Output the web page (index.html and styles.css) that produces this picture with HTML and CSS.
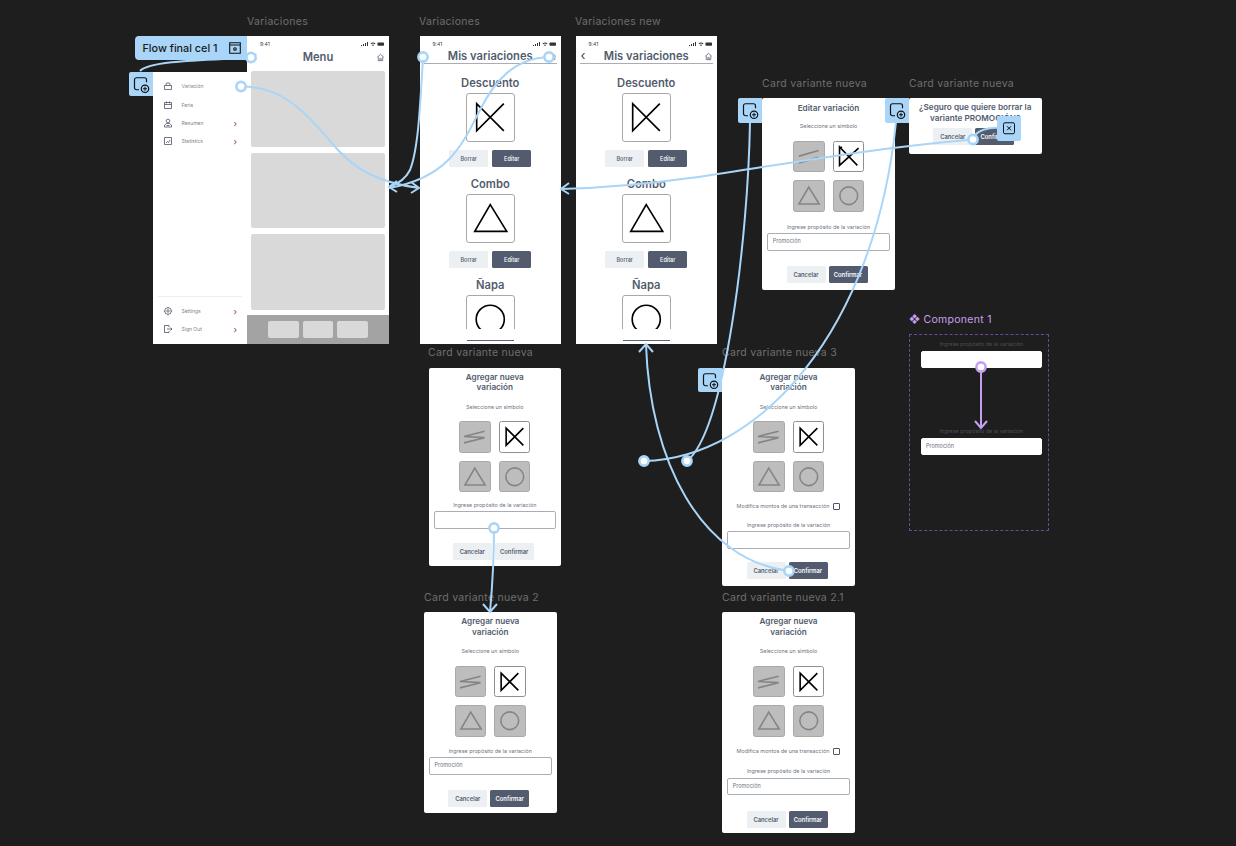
FILE: index.html
```html
<!DOCTYPE html>
<html lang="es">

    <head>
        <meta charset="UTF-8">
        <title>Variaciones</title>
        <link rel="stylesheet" href="styles.css">
    </head>

    <body>
        <svg class="defs" width="0" height="0">
            <symbol id="sym-k" viewBox="0 0 48 48"><path d="M38 10 10 38V10L38 38"/></symbol>
            <symbol id="sym-k2" viewBox="0 0 48 48"><path d="M40 10 9 38V8L38 38M9 10l4-2"/></symbol>
            <symbol id="sym-t" viewBox="0 0 48 48"><path d="M24 10 41 37.5H8Z"/></symbol>
            <symbol id="sym-c" viewBox="0 0 48 48"><circle cx="24" cy="24" r="14.5"/></symbol>
            <symbol id="sym-z" viewBox="0 0 48 48"><path d="M40 15 6.5 23.5 40 25.5 6.5 34"/></symbol>
            <symbol id="sym-p" viewBox="0 0 48 48"><path d="M40 14 8 23M40 25 8 34"/></symbol>
            <symbol id="ic-home" viewBox="0 0 10 10"><path d="M1.5 4.6 5 1.5l3.5 3.1M2.5 4v4.5h5V4M4.2 8.5V6.2h1.6v2.3" fill="none" stroke="currentColor" stroke-width=".8"/></symbol>
            <symbol id="ic-status" viewBox="0 0 24 6">
                <path d="M1 5h1V4H1zM3 5h1V3H3zM5 5h1V2H5zM7 5h1V1H7z" fill="currentColor"/>
                <path d="M10.5 2.4a4 4 0 0 1 5 0l-.7.8a3 3 0 0 0-3.6 0zM13 5.2l-1-1.2a1.6 1.6 0 0 1 2 0z" fill="currentColor"/>
                <rect x="17.5" y="1.5" width="6.5" height="3.2" rx=".7" fill="currentColor"/>
            </symbol>
            <symbol id="ic-add" viewBox="0 0 24 24">
                <path d="M10 17.5H7.5a2 2 0 0 1-2-2v-8a2 2 0 0 1 2-2h8a2 2 0 0 1 2 2V10" fill="none" stroke="currentColor" stroke-width="1.2"/>
                <circle cx="16" cy="16.5" r="3.7" fill="none" stroke="currentColor" stroke-width="1.2"/>
                <path d="M14 16.5h4M16 14.5v4" stroke="currentColor" stroke-width="1"/>
            </symbol>
        </svg>

        <div class="canvas">
            <span class="frame-name name-menu">Variaciones</span>
            <span class="frame-name name-mis">Variaciones</span>
            <span class="frame-name name-new">Variaciones new</span>
            <span class="frame-name name-edit">Card variante nueva</span>
            <span class="frame-name name-del">Card variante nueva</span>
            <span class="frame-name name-card1">Card variante nueva</span>
            <span class="frame-name name-card3">Card variante nueva 3</span>
            <span class="frame-name name-card2">Card variante nueva 2</span>
            <span class="frame-name name-card21">Card variante nueva 2.1</span>
            <span class="frame-name name-comp">❖ Component 1</span>

            <!-- menu -->
            <section class="frame phone phone-menu">
                <div class="status"><span>9:41</span><svg class="status-icons"><use href="#ic-status"/></svg></div>
                <div class="phone-head menu-head">
                    <span class="back-left">‹</span>
                    <h1>Menu</h1>
                    <svg class="home"><use href="#ic-home"/></svg>
                </div>
                <div class="menu-cards">
                    <div class="menu-card"></div>
                    <div class="menu-card"></div>
                    <div class="menu-card"></div>
                </div>
                <div class="menu-bar">
                    <span></span><span></span><span></span>
                </div>
            </section>

            <aside class="frame drawer">
                <ul class="drawer-list">
                    <li>
                        <svg viewBox="0 0 10 10"><path d="M1.5 4.5h7v4h-7zM3 4.5V3a1 1 0 0 1 1-1h2a1 1 0 0 1 1 1v1.5"/></svg>
                        <span>Variación</span>
                    </li>
                    <li>
                        <svg viewBox="0 0 10 10"><path d="M1.5 2.5h7v6h-7zM1.5 4.5h7M3.5 1.5v2M6.5 1.5v2"/></svg>
                        <span>Feria</span>
                    </li>
                    <li>
                        <svg viewBox="0 0 10 10"><circle cx="5" cy="3" r="1.8"/><path d="M1.5 9V7l2-1.5h3l2 1.5v2zM3.5 7.5h3"/></svg>
                        <span>Resumen</span><i class="chev">›</i>
                    </li>
                    <li>
                        <svg viewBox="0 0 10 10"><path d="M1.5 1.5h7v7h-7zM3 7l1.5-1.500L5.500 6.500 7 4"/></svg>
                        <span>Statistics</span><i class="chev">›</i>
                    </li>
                </ul>
                <ul class="drawer-list drawer-bottom">
                    <li>
                        <svg viewBox="0 0 10 10"><circle cx="5" cy="5" r="3.3"/><circle cx="5" cy="5" r="1.2"/><path d="M5 .8v1M5 8.2v1M.8 5h1M8.2 5h1"/></svg>
                        <span>Settings</span><i class="chev">›</i>
                    </li>
                    <li>
                        <svg viewBox="0 0 10 10"><path d="M6 3V1.5H1.5v7H6V7M4 5h5M7.5 3.5 9 5 7.5 6.5"/></svg>
                        <span>Sign Out</span><i class="chev">›</i>
                    </li>
                </ul>
            </aside>

            <!-- mis variaciones -->
            <section class="frame phone phone-mis">
                <div class="status"><span>9:41</span><svg class="status-icons"><use href="#ic-status"/></svg></div>
                <div class="phone-head">
                    <h1>Mis variaciones</h1>
                    <svg class="home"><use href="#ic-home"/></svg>
                </div>
                <div class="phone-scroll">
                    <h2>Descuento</h2>
                    <div class="big-box"><svg><use href="#sym-k"/></svg></div>
                    <div class="btn-row"><button class="btn">Borrar</button><button class="btn dark">Editar</button></div>
                    <h2>Combo</h2>
                    <div class="big-box"><svg><use href="#sym-t"/></svg></div>
                    <div class="btn-row"><button class="btn">Borrar</button><button class="btn dark">Editar</button></div>
                    <h2>Ñapa</h2>
                    <div class="big-box"><svg><use href="#sym-c"/></svg></div>
                </div>
                <div class="home-line"></div>
            </section>

            <section class="frame phone phone-new">
                <div class="status"><span>9:41</span><svg class="status-icons"><use href="#ic-status"/></svg></div>
                <div class="phone-head">
                    <span class="back">‹</span>
                    <h1>Mis variaciones</h1>
                    <svg class="home"><use href="#ic-home"/></svg>
                </div>
                <div class="phone-scroll">
                    <h2>Descuento</h2>
                    <div class="big-box"><svg><use href="#sym-k"/></svg></div>
                    <div class="btn-row"><button class="btn">Borrar</button><button class="btn dark">Editar</button></div>
                    <h2>Combo</h2>
                    <div class="big-box"><svg><use href="#sym-t"/></svg></div>
                    <div class="btn-row"><button class="btn">Borrar</button><button class="btn dark">Editar</button></div>
                    <h2>Ñapa</h2>
                    <div class="big-box"><svg><use href="#sym-c"/></svg></div>
                </div>
                <div class="home-line"></div>
            </section>

            <!-- editar -->
            <section class="frame card card-edit">
                <h3>Editar variación</h3>
                <p class="small pick">Seleccione un símbolo</p>
                <div class="sym-grid">
                    <div class="sym off"><svg><use href="#sym-p"/></svg></div>
                    <div class="sym"><svg><use href="#sym-k2"/></svg></div>
                    <div class="sym off"><svg><use href="#sym-t"/></svg></div>
                    <div class="sym off"><svg><use href="#sym-c"/></svg></div>
                </div>
                <p class="small field-label">Ingrese propósito de la variación</p>
                <div class="field">Promoción</div>
                <div class="card-btns"><button class="btn">Cancelar</button><button class="btn dark">Confirmar</button></div>
            </section>

            <!-- borrar -->
            <section class="frame card card-del">
                <h3>¿Seguro que quiere borrar la variante PROMOCIÓN?</h3>
                <div class="card-btns"><button class="btn">Cancelar</button><button class="btn dark">Confirmar</button></div>
            </section>

            <!-- nueva -->
            <section class="frame card card-1">
                <h3>Agregar nueva<br>variación</h3>
                <p class="small pick">Seleccione un símbolo</p>
                <div class="sym-grid">
                    <div class="sym off"><svg><use href="#sym-z"/></svg></div>
                    <div class="sym"><svg><use href="#sym-k"/></svg></div>
                    <div class="sym off"><svg><use href="#sym-t"/></svg></div>
                    <div class="sym off"><svg><use href="#sym-c"/></svg></div>
                </div>
                <p class="small field-label">Ingrese propósito de la variación</p>
                <div class="field"></div>
                <div class="card-btns"><button class="btn">Cancelar</button><button class="btn">Confirmar</button></div>
            </section>

            <section class="frame card card-2">
                <h3>Agregar nueva<br>variación</h3>
                <p class="small pick">Seleccione un símbolo</p>
                <div class="sym-grid">
                    <div class="sym off"><svg><use href="#sym-z"/></svg></div>
                    <div class="sym"><svg><use href="#sym-k"/></svg></div>
                    <div class="sym off"><svg><use href="#sym-t"/></svg></div>
                    <div class="sym off"><svg><use href="#sym-c"/></svg></div>
                </div>
                <p class="small field-label">Ingrese propósito de la variación</p>
                <div class="field">Promoción</div>
                <div class="card-btns"><button class="btn">Cancelar</button><button class="btn dark">Confirmar</button></div>
            </section>

            <section class="frame card card-3">
                <h3>Agregar nueva<br>variación</h3>
                <p class="small pick">Seleccione un símbolo</p>
                <div class="sym-grid">
                    <div class="sym off"><svg><use href="#sym-z"/></svg></div>
                    <div class="sym"><svg><use href="#sym-k"/></svg></div>
                    <div class="sym off"><svg><use href="#sym-t"/></svg></div>
                    <div class="sym off"><svg><use href="#sym-c"/></svg></div>
                </div>
                <div class="check-row"><span class="small">Modifica montos de una transacción</span><i class="check"></i></div>
                <p class="small field-label">Ingrese propósito de la variación</p>
                <div class="field"></div>
                <div class="card-btns"><button class="btn">Cancelar</button><button class="btn dark">Confirmar</button></div>
            </section>

            <section class="frame card card-21">
                <h3>Agregar nueva<br>variación</h3>
                <p class="small pick">Seleccione un símbolo</p>
                <div class="sym-grid">
                    <div class="sym off"><svg><use href="#sym-z"/></svg></div>
                    <div class="sym"><svg><use href="#sym-k"/></svg></div>
                    <div class="sym off"><svg><use href="#sym-t"/></svg></div>
                    <div class="sym off"><svg><use href="#sym-c"/></svg></div>
                </div>
                <div class="check-row"><span class="small">Modifica montos de una transacción</span><i class="check"></i></div>
                <p class="small field-label">Ingrese propósito de la variación</p>
                <div class="field">Promoción</div>
                <div class="card-btns"><button class="btn">Cancelar</button><button class="btn dark">Confirmar</button></div>
            </section>

            <!-- component -->
            <section class="frame component">
                <div class="variant">
                    <p class="small">Ingrese propósito de la variación</p>
                    <div class="field"></div>
                </div>
                <div class="variant">
                    <p class="small">Ingrese propósito de la variación</p>
                    <div class="field">Promoción</div>
                </div>
            </section>

            <!-- prototype wires -->
            <svg class="wires" width="1236" height="846" viewBox="0 0 1236 846">
                <g class="wire">
                    <path d="M251 57.5C215 60 150 60 140 71"/>
                    <path d="M241 86.5C290 86 315 125 338 150 355 168 375 182 419 188M411 182l8 6-8 5"/>
                    <path d="M423 57C420 110 418 150 410 170 405 180 395 185 389 187M397 181l-8 6 8 5"/>
                    <path d="M549 57C515 58 495 80 480 110 460 150 445 178 389 188"/>
                    <path d="M973 139.5C850 150 740 172 690 178 640 185 600 188 561 189M569 183l-8 6 8 5"/>
                    <path d="M494 528C494 560 492 590 490 612M483 604l7 8 7-8"/>
                    <path d="M789 571C700 560 650 460 646 345M639 352l7-8 7 8"/>
                    <path d="M687 461C725 430 748 240 750 122"/>
                    <path d="M644 461C760 458 875 330 896 122"/>
                    <path d="M973 139.5C975 130 990 127 1000 128"/>
                </g>
                <g class="nodes">
                    <circle cx="251" cy="57.5" r="4.6"/>
                    <circle cx="241" cy="86.5" r="4.6"/>
                    <circle cx="423" cy="57" r="4.6"/>
                    <circle cx="549" cy="57" r="4.6"/>
                    <circle cx="973" cy="139.5" r="4.6"/>
                    <circle cx="494" cy="528" r="4.6"/>
                    <circle cx="789" cy="571" r="4.6"/>
                    <circle cx="687" cy="461" r="4.6"/>
                    <circle cx="644" cy="461" r="4.6"/>
                </g>
                <path class="comp-wire" d="M981 367V428M975 421l6 7 6-7"/>
                <circle class="comp-node" cx="981" cy="367" r="4.6"/>
            </svg>

            <div class="flow-tag">
                <span>Flow final cel 1</span>
                <svg viewBox="0 0 12 12"><path d="M.7.7h10.6v10.6H.7zM.7 3h10.6"/><circle cx="6" cy="7" r="1.3"/></svg>
            </div>
            <div class="badge badge-menu"><svg><use href="#ic-add"/></svg></div>
            <div class="badge badge-edit"><svg><use href="#ic-add"/></svg></div>
            <div class="badge badge-del"><svg><use href="#ic-add"/></svg></div>
            <div class="badge badge-card3"><svg><use href="#ic-add"/></svg></div>
            <div class="badge badge-close">
                <svg viewBox="0 0 24 24"><rect x="6.5" y="6.5" width="11" height="11" rx="1.5"/><path d="M10 10l4 4M14 10l-4 4"/></svg>
            </div>
        </div>
    </body>

</html>
```

FILE: styles.css
```css
:root {
    --canvas: #1e1e1e;
    --label: #6e6e6e;
    --slate: #525c6e;
    --light-btn: #edf0f3;
    --wire: #a8d5f8;
    --purple: #c6a0f0;
}

* {
    box-sizing: border-box;
}

html,
body {
    margin: 0;
    height: 846px;
    overflow: hidden;
    background: var(--canvas);
    font-family: "Inter", "Liberation Sans", sans-serif;
}

h1,
h2,
h3,
p,
ul {
    margin: 0;
    padding: 0;
}

ul {
    list-style: none;
}

.defs {
    position: absolute;
}

.canvas {
    position: relative;
    width: 1236px;
    height: 846px;
}

/* frame names on the canvas */
.frame-name {
    position: absolute;
    font-size: 10.5px;
    line-height: 14px;
    letter-spacing: .28px;
    color: var(--label);
    white-space: nowrap;
}

.name-menu { left: 247px; top: 15px; }
.name-mis { left: 419px; top: 15px; }
.name-new { left: 575px; top: 15px; }
.name-edit { left: 762px; top: 77px; }
.name-del { left: 909px; top: 77px; }
.name-card1 { left: 428px; top: 346px; }
.name-card3 { left: 722px; top: 346px; }
.name-card2 { left: 424px; top: 591px; }
.name-card21 { left: 722px; top: 591px; }
.name-comp { left: 909px; top: 313px; color: var(--purple); }

.frame {
    position: absolute;
    background: #fff;
    color: var(--slate);
}

/* phones */
.phone {
    top: 36px;
    height: 308px;
    display: flex;
    flex-direction: column;
}

.phone-menu { left: 247px; width: 142px; }
.phone-mis { left: 419.5px; width: 141.5px; }
.phone-new { left: 575.5px; width: 141.5px; }

.status {
    height: 12px;
    padding: 4px 5px 0 13px;
    display: flex;
    justify-content: space-between;
    align-items: center;
    font-size: 5px;
    color: #333;
}

.status-icons {
    width: 24px;
    height: 6px;
    color: #333;
}

.phone-head {
    position: relative;
    height: 15px;
    margin: 1px 4px 0;
    text-align: center;
    border-bottom: 1px solid #a9adb5;
}

.phone-head h1 {
    font-size: 11.2px;
    line-height: 15px;
    font-weight: 600;
}

.menu-head {
    margin: 2px 4px 0;
    border-bottom: 0;
}

.home {
    position: absolute;
    right: 0;
    top: 3px;
    width: 9px;
    height: 9px;
    color: var(--slate);
}

.back,
.back-left {
    position: absolute;
    left: 1px;
    top: -2px;
    font-size: 13px;
    line-height: 16px;
    color: #444;
}

.menu-cards {
    flex: 1;
    padding: 6px 4px 0;
    display: flex;
    flex-direction: column;
    gap: 6px;
}

.menu-card {
    height: 75.5px;
    background: #d9d9d9;
    border-radius: 2px;
}

.menu-bar {
    height: 29px;
    background: #a3a3a3;
    display: flex;
    justify-content: center;
    align-items: center;
    gap: 4px;
}

.menu-bar span {
    width: 30.5px;
    height: 17px;
    background: #d9d9d9;
    border-radius: 2px;
}

.phone-scroll {
    flex: 1;
    height: 0;
    overflow: hidden;
    display: flex;
    flex-direction: column;
    align-items: center;
    padding-top: 12px;
    margin-bottom: 11px;
}

.phone-scroll h2 {
    font-size: 11.2px;
    line-height: 14px;
    font-weight: 600;
    margin-bottom: 3px;
}

.big-box {
    flex: none;
    width: 48.5px;
    height: 48.5px;
    border: 1px solid #a8a8a8;
    border-radius: 3px;
    color: #000;
    stroke-width: 1.7;
}

.big-box svg {
    display: block;
    width: 100%;
    height: 100%;
    fill: none;
    stroke: currentColor;
}

.btn-row {
    flex: none;
    display: flex;
    gap: 4px;
    margin: 8.5px 0 10px;
}

.btn {
    width: 39px;
    height: 17px;
    padding: 0;
    border: 0;
    border-radius: 1.5px;
    background: var(--light-btn);
    color: var(--slate);
    font-family: inherit;
    font-size: 5.5px;
    font-weight: 500;
}

.btn.dark {
    background: var(--slate);
    color: #fff;
}

.home-line {
    height: 1.5px;
    width: 47px;
    margin: 0 auto 3px;
    background: #5a6478;
}

/* drawer */
.drawer {
    left: 153px;
    top: 71.5px;
    width: 94px;
    height: 272.5px;
    display: flex;
    flex-direction: column;
    justify-content: space-between;
    padding: 5.8px 5px 5.5px;
}

.drawer-list li {
    height: 18.3px;
    display: flex;
    align-items: center;
    gap: 8.5px;
    padding: 0 5px;
    font-size: 5px;
    color: #7d838e;
}

.drawer-list svg {
    width: 10px;
    height: 10px;
    flex: none;
    fill: none;
    stroke: #4d5563;
    stroke-width: .8;
}

.drawer-list span {
    flex: 1;
}

.chev {
    font-style: normal;
    font-size: 9px;
    color: #8a3a3a;
}

.drawer-bottom {
    border-top: 1px solid #eee;
    padding-top: 5px;
}

/* cards */
.card {
    display: flex;
    flex-direction: column;
    align-items: center;
    border-radius: 2px;
}

.card h3 {
    font-size: 8.2px;
    line-height: 10.5px;
    font-weight: 600;
    text-align: center;
}

.small {
    font-size: 5.4px;
    line-height: 7px;
    color: #6d7480;
    white-space: nowrap;
}

.pick {
    margin-top: 11px;
}

.sym-grid {
    display: grid;
    grid-template-columns: 31.5px 31.5px;
    grid-auto-rows: 31.5px;
    gap: 8px;
    margin-top: 10.5px;
}

.sym {
    border: 1px solid #8f8f8f;
    border-radius: 2.5px;
    background: #fff;
    color: #000;
    stroke-width: 2.6;
}

.sym.off {
    background: #bdbdbd;
    border-color: #a9a9a9;
    color: #858585;
    stroke-width: 2.6;
}

.sym svg {
    display: block;
    width: 100%;
    height: 100%;
    fill: none;
    stroke: currentColor;
}

.field-label {
    margin-top: 10.2px;
}

.field {
    width: 122.5px;
    height: 17.5px;
    margin-top: 2.1px;
    padding-left: 4.5px;
    border: 1px solid #a9adb5;
    border-radius: 2px;
    background: #fff;
    font-size: 5.5px;
    line-height: 15.5px;
    color: #6d7480;
}

.card-btns {
    display: flex;
    gap: 3px;
    margin: 14.2px 3px 0 0;
}

.card .btn {
    font-size: 5.8px;
    font-weight: 600;
}

.check-row {
    display: flex;
    align-items: center;
    gap: 4px;
    margin-top: 11.2px;
}

.check {
    width: 7px;
    height: 7px;
    border: 1px solid #4d5563;
    border-radius: 1px;
}

.card-edit { left: 762px; top: 98px; width: 133px; height: 192px; padding-top: 5px; }
.card-edit .pick { margin-top: 9.5px; }
.card-edit .field-label { margin-top: 12.7px; }
.card-edit .card-btns { margin-top: 15.2px; }

.card-del { left: 909px; top: 98px; width: 132.5px; height: 56px; padding-top: 4px; }
.card-del .card-btns { margin-top: 5px; }

.card-1 { left: 428.5px; top: 367.5px; width: 132.5px; height: 198.5px; padding-top: 4px; }

.card-2 { left: 424px; top: 612px; width: 132.5px; height: 201px; padding-top: 4px; }
.card-2 .field-label { margin-top: 11.7px; }
.card-2 .card-btns { margin-top: 15.2px; }

.card-3 { left: 722px; top: 367.5px; width: 133px; height: 218.5px; padding-top: 4px; }
.card-3 .field-label { margin-top: 12px; }
.card-3 .card-btns { margin-top: 13.2px; }

.card-21 { left: 722px; top: 612px; width: 133px; height: 221px; padding-top: 4px; }
.card-21 .check-row { margin-top: 11.7px; }
.card-21 .field-label { margin-top: 13.3px; }
.card-21 .field { margin-top: 2.5px; }
.card-21 .card-btns { margin-top: 15.2px; }

/* component set */
.component {
    left: 909px;
    top: 334px;
    width: 140px;
    height: 197px;
    background: transparent;
    border: 1px dashed #6a4a9a;
    border-radius: 1px;
    padding: 5.5px 0 0 10.5px;
    display: flex;
    flex-direction: column;
    gap: 60px;
}

.variant {
    width: 121.5px;
}

.variant .small {
    color: #4a4f5a;
    text-align: center;
}

.variant .field {
    width: 121.5px;
    height: 17px;
    margin: 3px 0 0;
    border-color: #fff;
}

/* prototype overlay */
.wires {
    position: absolute;
    left: 0;
    top: 0;
    pointer-events: none;
}

.wire path {
    fill: none;
    stroke: var(--wire);
    stroke-width: 2;
}

.nodes circle {
    fill: #fff;
    stroke: var(--wire);
    stroke-width: 2.6;
}

.comp-wire {
    fill: none;
    stroke: var(--purple);
    stroke-width: 2;
}

.comp-node {
    fill: #fff;
    stroke: var(--purple);
    stroke-width: 2.6;
}

.flow-tag {
    position: absolute;
    left: 134.5px;
    top: 36px;
    width: 112.5px;
    height: 24px;
    padding: 0 6px 0 8px;
    display: flex;
    align-items: center;
    justify-content: space-between;
    background: var(--wire);
    border-radius: 4px 0 0 4px;
    color: #1a1a1a;
    font-size: 10.8px;
    font-weight: 500;
}

.flow-tag svg {
    width: 12px;
    height: 12px;
    fill: none;
    stroke: #111;
    stroke-width: 1.1;
}

.badge {
    position: absolute;
    width: 24px;
    height: 24.5px;
    background: var(--wire);
    color: #111;
    border-radius: 2px 0 0 2px;
}

.badge svg {
    display: block;
    width: 100%;
    height: 100%;
}

.badge-menu { left: 129px; top: 71.5px; }
.badge-edit { left: 738px; top: 98px; }
.badge-del { left: 885px; top: 98px; }
.badge-card3 { left: 698px; top: 367.5px; }

.badge-close {
    left: 997px;
    top: 116px;
    border-radius: 2px;
}

.badge-close svg {
    fill: none;
    stroke: #111;
    stroke-width: 1;
}
```
